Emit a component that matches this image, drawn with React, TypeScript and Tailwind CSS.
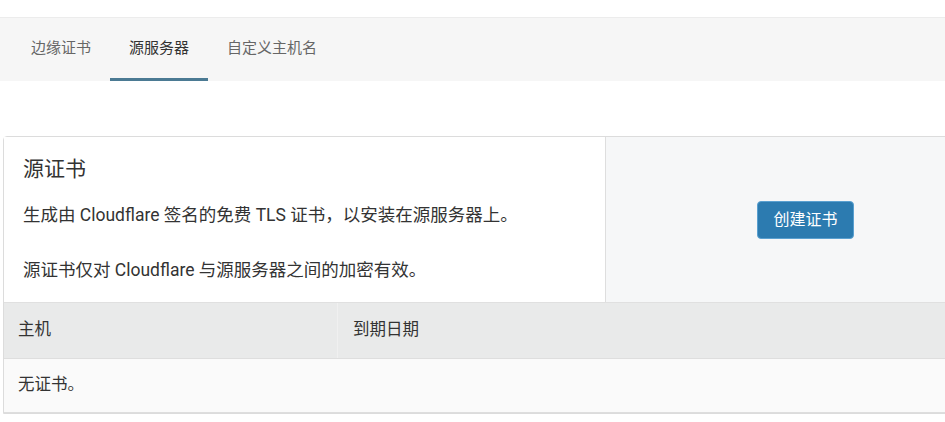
import React from "react";

export default function App() {
  const font = { fontFamily: 'Roboto, "Noto Sans CJK SC", sans-serif' };
  return (
    <div className="w-[945px] h-[422px] overflow-hidden bg-white text-[#333]" style={font}>
      <div className="h-[17px]" />
      <div className="h-[64px] border-t border-[#ececec] bg-[#f6f6f6] flex pl-3">
        <div className="px-[19px] flex items-center text-[15px] text-[#666] border-b-[3px] border-transparent">边缘证书</div>
        <div className="px-[19px] flex items-center text-[15px] text-[#333] border-b-[3px] border-[#4b7a93]">源服务器</div>
        <div className="px-[19px] flex items-center text-[15px] text-[#666] border-b-[3px] border-transparent">自定义主机名</div>
      </div>
      <div className="h-[55px]" />
      <div className="ml-[3px] w-[1003px] border border-[#dcdcdc] rounded-tl-[4px]">
        <div className="flex h-[165px]">
          <div className="w-[602px] bg-white border-r border-[#dedede] pl-[19px] pt-[18px]">
            <h2 className="text-[21px] leading-[28px] text-[#333]">源证书</h2>
            <p className="mt-[21px] text-[17.5px] leading-[22px]">生成由 Cloudflare 签名的免费 TLS 证书，以安装在源服务器上。</p>
            <p className="mt-[33px] text-[17.5px] leading-[22px]">源证书仅对 Cloudflare 与源服务器之间的加密有效。</p>
          </div>
          <div className="flex-1 bg-[#f6f7f8] flex items-center justify-center">
            <button className="h-[38px] w-[97px] rounded-[4px] bg-[#2c7bb0] text-white text-[16px] border border-[#5aa0d0]">创建证书</button>
          </div>
        </div>
        <div className="flex h-[56px] bg-[#e9eaea] border-t border-[#e0e0e0] text-[16.5px]">
          <div className="w-[334px] pl-[14px] flex items-center border-r border-[#f0f0f0]">主机</div>
          <div className="flex-1 pl-[15px] flex items-center">到期日期</div>
        </div>
        <div className="flex h-[55px] bg-[#fafafa] border-t border-b border-[#dedede] text-[16.5px] items-center pl-[14px]">无证书。</div>
      </div>
    </div>
  );
}
